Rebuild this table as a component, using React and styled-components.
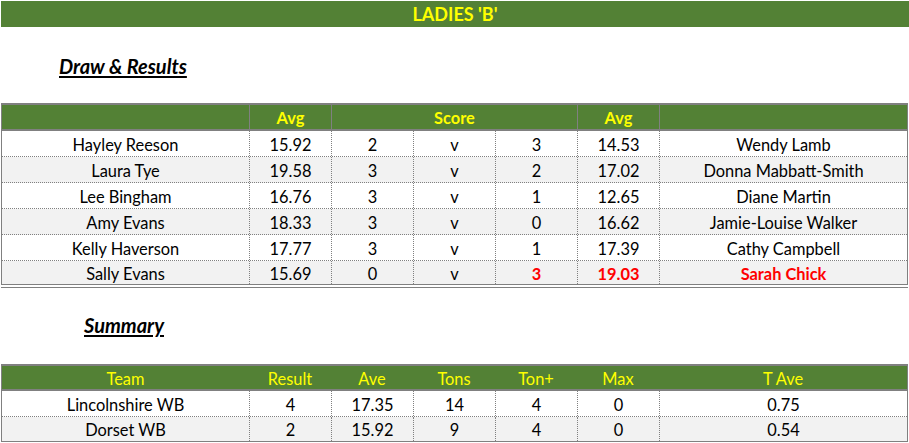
import React from 'react';
import styled, { createGlobalStyle } from 'styled-components';

const GREEN = '#538135';
const YELLOW = '#ffff00';
const LINE = '#808080';

const Global = createGlobalStyle`
  html, body { margin: 0; padding: 0; background: #fff; }
  body { font-family: Lato, 'Open Sans', sans-serif; color: #000; }
`;

const Page = styled.div`
  width: 909px;
  height: 443px;
  overflow: hidden;
  padding-top: 1px;
  box-sizing: border-box;
`;

const TitleBar = styled.div`
  margin-left: 1px;
  height: 26px;
  background: ${GREEN};
  color: ${YELLOW};
  font-weight: 700;
  font-size: 18px;
  display: flex;
  align-items: center;
  justify-content: center;
`;

const SectionTitle = styled.h2`
  margin: 0;
  box-sizing: border-box;
  height: 76px;
  padding-top: ${p => p.$top}px;
  padding-left: ${p => p.$indent}px;
  font-size: 20px;
  line-height: 24px;
  font-weight: 700;
  font-style: italic;
  span { text-decoration: underline; text-underline-offset: 2px; }
`;

const Table = styled.div`
  margin-left: 1px;
  width: 907px;
  box-sizing: border-box;
  border-left: 1px solid ${LINE};
  border-right: 1px solid ${LINE};
  border-bottom: 1px solid ${LINE};
`;

const DoubleRule = styled.div`
  margin: 2px 0 0 1px;
  width: 907px;
  height: 1px;
  background: ${LINE};
`;

const Row = styled.div`
  display: grid;
  grid-template-columns: 247px 82px 82px 82px 82px 82px 1fr;
  height: ${p => p.$h}px;
  box-sizing: border-box;
  background: ${p => (p.$alt ? '#f2f2f2' : '#fff')};
  border-bottom: ${p => (p.$last ? 'none' : `1px dotted ${LINE}`)};
`;

const HeadRow = styled.div`
  display: grid;
  grid-template-columns: 247px 82px 82px 82px 82px 82px 1fr;
  height: ${p => p.$h}px;
  box-sizing: border-box;
  background: ${GREEN};
  border-top: 2px solid ${LINE};
  border-bottom: 2px solid ${LINE};
`;

const HeadCell = styled.div`
  display: flex;
  align-items: center;
  justify-content: center;
  color: ${YELLOW};
  font-size: 16.4px;
  font-weight: ${p => (p.$bold ? 700 : 400)};
  grid-column: span ${p => p.$span || 1};
  border-left: ${p => (p.$sep ? `1px solid ${LINE}` : 'none')};
  padding-top: 1px;
`;

const Cell = styled.div`
  display: flex;
  align-items: center;
  justify-content: center;
  font-size: 16.4px;
  padding-top: 1px;
  border-left: ${p => (p.$first ? 'none' : `1px dotted ${LINE}`)};
  color: ${p => (p.$win ? '#ff0000' : '#000')};
  font-weight: ${p => (p.$win ? 700 : 400)};
  white-space: nowrap;
`;

const draw = [
  ['Hayley Reeson', '15.92', '2', '3', '14.53', 'Wendy Lamb', false],
  ['Laura Tye', '19.58', '3', '2', '17.02', 'Donna Mabbatt-Smith', false],
  ['Lee Bingham', '16.76', '3', '1', '12.65', 'Diane Martin', false],
  ['Amy Evans', '18.33', '3', '0', '16.62', 'Jamie-Louise Walker', false],
  ['Kelly Haverson', '17.77', '3', '1', '17.39', 'Cathy Campbell', false],
  ['Sally Evans', '15.69', '0', '3', '19.03', 'Sarah Chick', true],
];

const summary = [
  ['Lincolnshire WB', '4', '17.35', '14', '4', '0', '0.75'],
  ['Dorset WB', '2', '15.92', '9', '4', '0', '0.54'],
];

export default function App() {
  return (
    <Page>
      <Global />
      <TitleBar>LADIES 'B'</TitleBar>
      <SectionTitle $top={27} $indent={59}><span>Draw &amp; Results</span></SectionTitle>
      <Table>
        <HeadRow $h={28}>
          <HeadCell />
          <HeadCell $bold $sep>Avg</HeadCell>
          <HeadCell $bold $sep $span={3}>Score</HeadCell>
          <HeadCell $bold $sep>Avg</HeadCell>
          <HeadCell $sep />
        </HeadRow>
        {draw.map((r, i) => (
          <Row key={r[0]} $h={i === draw.length - 1 ? 23 : 26} $alt={i % 2 === 1} $last={i === draw.length - 1}>
            <Cell $first>{r[0]}</Cell>
            <Cell>{r[1]}</Cell>
            <Cell>{r[2]}</Cell>
            <Cell>v</Cell>
            <Cell $win={r[6]}>{r[3]}</Cell>
            <Cell $win={r[6]}>{r[4]}</Cell>
            <Cell $win={r[6]}>{r[5]}</Cell>
          </Row>
        ))}
      </Table>
      <DoubleRule />
      <SectionTitle $top={25} $indent={84}><span>Summary</span></SectionTitle>
      <Table>
        <HeadRow $h={27}>
          {['Team', 'Result', 'Ave', 'Tons', 'Ton+', 'Max', 'T Ave'].map(h => (
            <HeadCell key={h}>{h}</HeadCell>
          ))}
        </HeadRow>
        {summary.map((r, i) => (
          <Row key={r[0]} $h={i === summary.length - 1 ? 24 : 26} $alt={i % 2 === 1} $last={i === summary.length - 1}>
            {r.map((c, j) => (
              <Cell key={j} $first={j === 0}>{c}</Cell>
            ))}
          </Row>
        ))}
      </Table>
    </Page>
  );
}
